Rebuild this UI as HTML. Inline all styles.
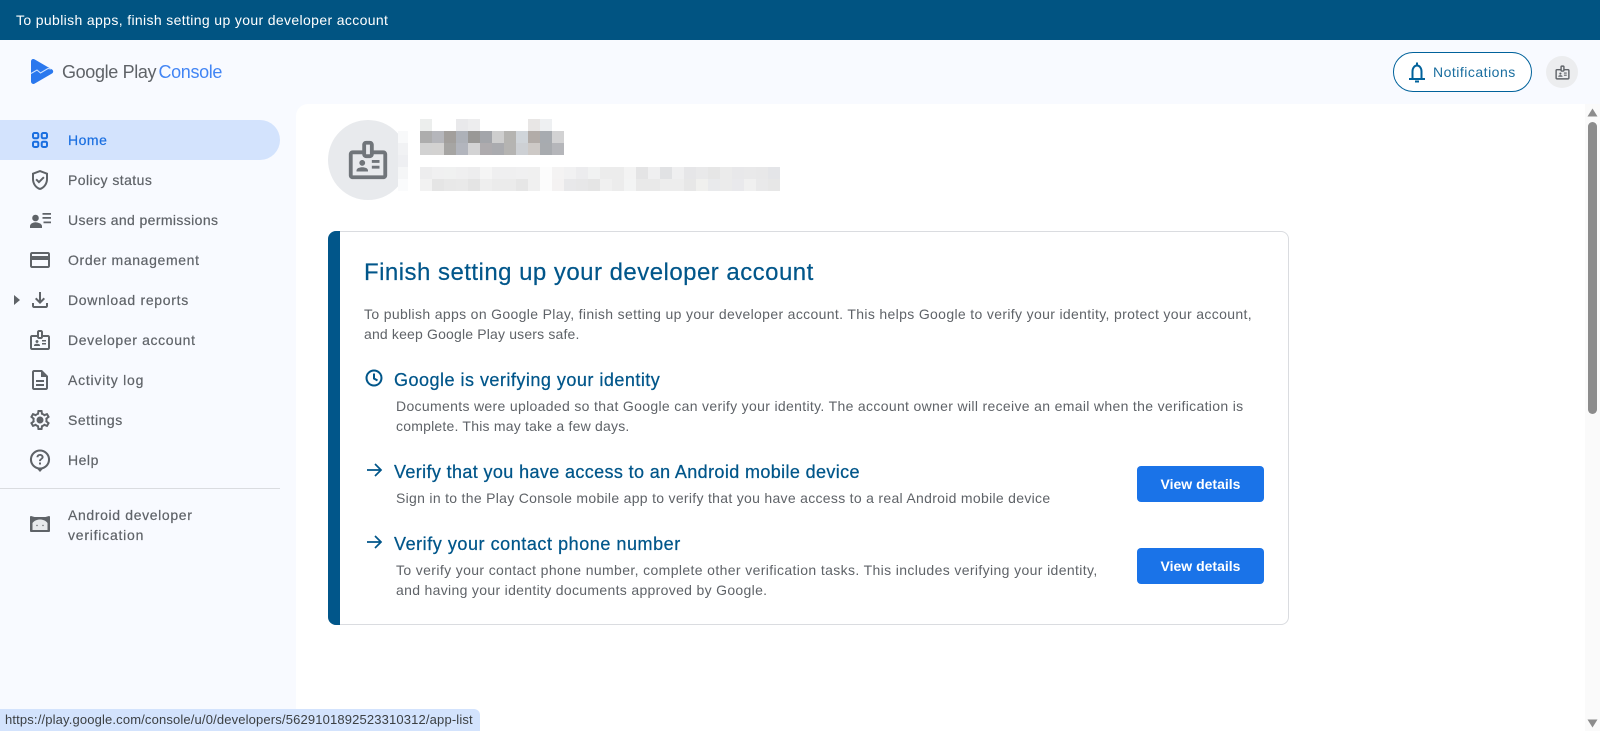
<!DOCTYPE html>
<html><head><meta charset="utf-8"><style>
*{box-sizing:border-box}
html,body{margin:0;padding:0;width:1600px;height:731px;overflow:hidden;background:#f8faff;font-family:"Liberation Sans",sans-serif}
.a{position:absolute;white-space:nowrap}
.nav{left:68px;font-size:14px;line-height:20px;color:#5f6368;letter-spacing:.52px;-webkit-text-stroke:.2px}
.ic{position:absolute;left:28px;width:24px;height:24px;fill:#5f6368}
.h{left:394px;font-size:18px;line-height:24px;color:#01568a;letter-spacing:.43px;-webkit-text-stroke:.25px}
.d{font-size:14px;line-height:20px;color:#5f6368;letter-spacing:.27px}
.btn{left:1137px;width:127px;height:36px;background:#1a73e8;border-radius:4px;color:#fff;font-size:14px;font-weight:bold;line-height:36px;text-align:center}
</style></head><body>
<div class="a" style="left:0;top:0;width:1600px;height:40px;background:#015482"></div>
<div class="a" style="left:16px;top:10px;font-size:14px;line-height:20px;color:#fff;letter-spacing:.36px">To publish apps, finish setting up your developer account</div>

<svg class="a" style="left:30px;top:58px" width="24" height="27" viewBox="0 0 24 27"><path d="M1 3.500C1 1.400 3 .400 4.800 1.500L22 11.500c1.600 1 1.600 3 0 4L4.800 25.500C3 26.600 1 25.600 1 23.500z" fill="#2a78ee"/><path d="M1 15.500l6-3.500 3.500 3 7.500-4.500 3 .500" fill="none" stroke="#cfe3ff" stroke-width="1.100"/></svg>
<div class="a" style="left:62px;top:60px;font-size:18px;line-height:24px;color:#5f6368;letter-spacing:-.35px">Google Play <span style="color:#4285f4;position:absolute;left:96.500px;top:0;letter-spacing:-.35px">Console</span></div>

<div class="a" style="left:0;top:120px;width:280px;height:40px;background:#d3e3fd;border-radius:0 20px 20px 0"></div>
<svg class="ic" style="top:128px" viewBox="0 0 24 24"><g fill="none" stroke="#1a6fe0" stroke-width="2"><rect x="5" y="5" width="5.300" height="5.300" rx="1.500"/><rect x="13.700" y="5" width="5.300" height="5.300" rx="1.500"/><rect x="5" y="13.700" width="5.300" height="5.300" rx="1.500"/><rect x="13.700" y="13.700" width="5.300" height="5.300" rx="1.500"/></g></svg>
<div class="a nav" style="top:130px;color:#1a6fe0">Home</div>

<svg class="ic" style="top:168px" viewBox="0 0 24 24"><path d="M12 2 4 5v6.090c0 5.050 3.410 9.760 8 10.910 4.590-1.150 8-5.860 8-10.910V5l-8-3zm6 9.090c0 4-2.550 7.700-6 8.830-3.450-1.130-6-4.820-6-8.830v-4.700l6-2.250 6 2.250v4.700z"/><path d="M8.820 10.590 7.400 12l3.540 3.540 5.660-5.660-1.410-1.410-4.240 4.240z"/></svg>
<div class="a nav" style="top:170px;letter-spacing:.44px">Policy status</div>

<svg class="ic" style="top:208px" viewBox="0 0 24 24"><circle cx="7.500" cy="10" r="3.300"/><path d="M2 20v-2c0-2.400 3.300-3.800 5.500-3.800S14 15.600 14 18v2z"/><path d="M14.500 5h8.500v1.700h-8.500zM14.500 9h8.500v1.700h-8.500zM15.500 13.500h7.500v1.700h-7.500z"/></svg>
<div class="a nav" style="top:210px;letter-spacing:.38px">Users and permissions</div>

<svg class="ic" style="top:248px" viewBox="0 0 24 24"><path d="M20 4H4c-1.110 0-1.990.890-1.990 2L2 18c0 1.110.890 2 2 2h16c1.110 0 2-.890 2-2V6c0-1.110-.890-2-2-2zm0 14H4v-6h16v6zm0-10H4V6h16v2z"/></svg>
<div class="a nav" style="top:250px;letter-spacing:.64px">Order management</div>

<svg class="a" style="left:14px;top:295px" width="6" height="10" viewBox="0 0 6 10"><path d="M0 0l6 5-6 5z" fill="#5f6368"/></svg>
<svg class="ic" style="top:288px" viewBox="0 0 24 24"><path d="M18 15v3H6v-3H4v3c0 1.100.900 2 2 2h12c1.100 0 2-.900 2-2v-3h-2zm-1-4-1.410-1.410L13 12.170V4h-2v8.170L8.410 9.590 7 11l5 5 5-5z"/></svg>
<div class="a nav" style="top:290px;letter-spacing:.7px">Download reports</div>

<svg class="ic" style="top:328px" viewBox="0 0 24 24"><path d="M20 7h-5V4c0-1.100-.900-2-2-2h-2c-1.100 0-2 .900-2 2v3H4c-1.100 0-2 .900-2 2v11c0 1.100.900 2 2 2h16c1.100 0 2-.900 2-2V9c0-1.100-.900-2-2-2zm-9-3h2v5h-2V4zm9 16H4V9h5c0 1.100.900 2 2 2h2c1.100 0 2-.900 2-2h5v11z"/><path d="M9 15c.830 0 1.500-.670 1.500-1.500S9.830 12 9 12s-1.500.670-1.500 1.500S8.170 15 9 15zM11.080 16.180C10.440 15.900 9.740 15.750 9 15.750s-1.440.150-2.080.430C6.360 16.420 6 16.960 6 17.570V18h6v-.430c0-.610-.360-1.150-.920-1.390zM18 12h-4v1.500h4zM18 15h-4v1.500h4z"/></svg>
<div class="a nav" style="top:330px;letter-spacing:.64px">Developer account</div>

<svg class="ic" style="top:368px" viewBox="0 0 24 24"><path d="M8 16h8v2H8zm0-4h8v2H8zm6-10H6c-1.100 0-2 .900-2 2v16c0 1.100.890 2 1.990 2H18c1.100 0 2-.900 2-2V8l-6-6zm4 18H6V4h7v5h5v11z"/></svg>
<div class="a nav" style="top:370px;letter-spacing:.77px">Activity log</div>

<svg class="ic" style="top:408px" viewBox="0 0 24 24"><path d="M19.430 12.980c.040-.320.070-.640.070-.980 0-.340-.030-.660-.070-.980l2.110-1.650c.190-.150.240-.420.120-.640l-2-3.460c-.090-.160-.260-.250-.440-.250-.060 0-.120.010-.170.030l-2.490 1c-.520-.400-1.080-.730-1.690-.980l-.380-2.650C14.460 2.180 14.250 2 14 2h-4c-.250 0-.460.180-.490.420l-.380 2.650c-.610.250-1.170.590-1.690.980l-2.490-1c-.060-.020-.120-.030-.180-.030-.170 0-.340.090-.430.250l-2 3.460c-.130.220-.070.490.120.640l2.110 1.650c-.040.320-.070.650-.070.980 0 .330.030.660.070.980l-2.110 1.650c-.190.150-.240.420-.120.640l2 3.460c.090.160.260.250.440.250.060 0 .120-.010.170-.030l2.490-1c.520.400 1.080.730 1.690.980l.380 2.650c.030.240.240.420.490.420h4c.250 0 .460-.180.490-.420l.380-2.650c.610-.250 1.170-.590 1.690-.980l2.490 1c.060.020.120.030.180.030.170 0 .340-.090.430-.250l2-3.460c.120-.220.070-.490-.120-.640l-2.110-1.650zm-1.980-1.710c.040.310.050.520.050.730 0 .210-.020.430-.050.730l-.140 1.130.890.700 1.080.840-.700 1.210-1.270-.510-1.040-.420-.900.680c-.430.320-.840.560-1.250.730l-1.060.430-.160 1.130-.200 1.350h-1.400l-.190-1.350-.160-1.130-1.060-.430c-.430-.180-.830-.410-1.230-.710l-.910-.700-1.060.430-1.270.510-.700-1.210 1.080-.840.890-.700-.140-1.130c-.030-.310-.050-.540-.050-.740s.020-.430.050-.730l.140-1.130-.890-.700-1.080-.840.700-1.210 1.270.510 1.040.420.900-.680c.430-.320.840-.560 1.250-.730l1.060-.430.160-1.130.200-1.350h1.390l.190 1.350.160 1.130 1.060.430c.430.180.830.410 1.230.710l.910.700 1.060-.430 1.270-.510.700 1.210-1.070.850-.890.700.140 1.130z"/><circle cx="12" cy="12" r="3.500"/></svg>
<div class="a nav" style="top:410px">Settings</div>

<svg class="ic" style="top:448px" viewBox="0 0 24 24"><path d="M12 1.500a10 10 0 0 0-2.500 19.700L12 24l2.500-2.800A10 10 0 0 0 12 1.500zm0 18a8 8 0 1 1 0-16 8 8 0 0 1 0 16z"/><path d="M12 6c-2 0-3.500 1.400-3.500 3.200h1.900c0-.800.700-1.400 1.600-1.400s1.600.600 1.600 1.300c0 1.500-2.600 1.400-2.600 4h2c0-1.700 2.600-2 2.600-4 0-1.800-1.600-3.100-3.600-3.100zM11 14.500h2v2h-2z"/></svg>
<div class="a nav" style="top:450px">Help</div>

<div class="a" style="left:0;top:488px;width:280px;height:1px;background:#dadce0"></div>
<svg class="ic" style="top:511px" viewBox="0 0 24 24"><path d="M3 5L6.500 6H17.500L21 5c.600 0 1 .400 1 1V20c0 .600-.400 1-1 1H3c-.600 0-1-.400-1-1V6c0-.600.400-1 1-1z"/><path d="M4.500 19V12c2-2.500 4.500-3.500 7.500-3.500s5.500 1 7.500 3.500V19z" fill="#e8eaed"/><circle cx="9" cy="14.500" r=".700"/><circle cx="15" cy="14.500" r=".700"/></svg>
<div class="a nav" style="top:505px;letter-spacing:.64px">Android developer</div>
<div class="a nav" style="top:525px;letter-spacing:.77px">verification</div>

<div class="a" style="left:1393px;top:52px;width:139px;height:40px;border:1px solid #01629b;border-radius:20px;background:#fff"></div>
<svg class="a" style="left:1405px;top:60px" width="24" height="24" viewBox="0 0 24 24" fill="none" stroke="#01629b" stroke-width="2"><path d="M7.500 19V11.500c0-3.500 2-6 4.500-6s4.500 2.500 4.500 6V19"/><path d="M4 19H20M12 2.500V5.500M10 21.500H14"/></svg>
<div class="a" style="left:1433px;top:62px;font-size:14px;line-height:20px;color:#1a6e9f;letter-spacing:.5px">Notifications</div>
<div class="a" style="left:1546px;top:56px;width:32px;height:32px;border-radius:50%;background:#ecedef"></div>
<svg class="a" style="left:1553.500px;top:63.500px" width="17" height="17" viewBox="0 0 24 24" fill="#5f6368"><path d="M20 7h-5V4c0-1.100-.900-2-2-2h-2c-1.100 0-2 .900-2 2v3H4c-1.100 0-2 .900-2 2v11c0 1.100.900 2 2 2h16c1.100 0 2-.900 2-2V9c0-1.100-.900-2-2-2zm-9-3h2v5h-2V4zm9 16H4V9h5c0 1.100.900 2 2 2h2c1.100 0 2-.900 2-2h5v11z"/><path d="M9 15c.830 0 1.500-.670 1.500-1.500S9.830 12 9 12s-1.500.670-1.500 1.500S8.170 15 9 15zM11.080 16.180C10.440 15.900 9.740 15.750 9 15.750s-1.440.150-2.080.430C6.360 16.420 6 16.960 6 17.570V18h6v-.430c0-.610-.360-1.150-.920-1.390zM18 12h-4v1.500h4zM18 15h-4v1.500h4z"/></svg>

<div class="a" style="left:296px;top:104px;width:1304px;height:627px;background:#fff;border-radius:12px 0 0 0"></div>
<div class="a" style="left:1585px;top:104px;width:15px;height:627px;background:#fafafa"></div>
<svg class="a" style="left:1587px;top:108px" width="11" height="9"><path d="M5.500 0.500L10.500 8.500H0.500z" fill="#8c8c8c"/></svg>
<div class="a" style="left:1588px;top:122px;width:9px;height:292px;background:#8c8c8c;border-radius:5px"></div>
<svg class="a" style="left:1587px;top:719px" width="11" height="9"><path d="M0.500 0.500H10.500L5.500 8.500z" fill="#8c8c8c"/></svg>

<div class="a" style="left:328px;top:120px;width:80px;height:80px;border-radius:50%;background:#e8eaed"></div>
<svg class="a" style="left:345px;top:137px" width="46" height="46" viewBox="0 0 24 24" fill="#70757a"><path d="M20 7h-5V4c0-1.100-.900-2-2-2h-2c-1.100 0-2 .900-2 2v3H4c-1.100 0-2 .900-2 2v11c0 1.100.900 2 2 2h16c1.100 0 2-.900 2-2V9c0-1.100-.900-2-2-2zm-9-3h2v5h-2V4zm9 16H4V9h5c0 1.100.900 2 2 2h2c1.100 0 2-.900 2-2h5v11z"/><path d="M9 15c.830 0 1.500-.670 1.500-1.500S9.830 12 9 12s-1.500.670-1.500 1.500S8.170 15 9 15zM11.080 16.180C10.440 15.900 9.740 15.750 9 15.750s-1.440.150-2.080.430C6.360 16.420 6 16.960 6 17.570V18h6v-.430c0-.610-.360-1.150-.920-1.390zM18 12h-4v1.500h4zM18 15h-4v1.500h4z"/></svg>

<svg class="a" style="left:398px;top:119px" width="382" height="72" shape-rendering="crispEdges">
<g>
<rect x="0" y="12" width="10" height="12" fill="#f8f9fa"/><rect x="0" y="24" width="10" height="12" fill="#f1f2f4"/><rect x="0" y="36" width="10" height="12" fill="#eeeff2"/><rect x="0" y="48" width="10" height="12" fill="#f5f6f7"/><rect x="0" y="60" width="10" height="12" fill="#fafbfc"/>
<rect x="22" y="0" width="12" height="12" fill="#eceeed"/><rect x="58" y="0" width="12" height="12" fill="#e9e9eb"/><rect x="70" y="0" width="12" height="12" fill="#ededee"/><rect x="130" y="0" width="12" height="12" fill="#e8e6e5"/><rect x="142" y="0" width="12" height="12" fill="#eef0f2"/>
<rect x="22" y="12" width="12" height="12" fill="#adadad"/><rect x="34" y="12" width="12" height="12" fill="#b5b6bb"/><rect x="46" y="12" width="12" height="12" fill="#a29f9c"/><rect x="58" y="12" width="12" height="12" fill="#adb1b8"/><rect x="70" y="12" width="12" height="12" fill="#999896"/><rect x="82" y="12" width="12" height="12" fill="#a3a5aa"/><rect x="94" y="12" width="12" height="12" fill="#cecece"/><rect x="106" y="12" width="12" height="12" fill="#b5b4b1"/><rect x="118" y="12" width="12" height="12" fill="#d0d5da"/><rect x="130" y="12" width="12" height="12" fill="#b2aca8"/><rect x="142" y="12" width="12" height="12" fill="#a7abb0"/><rect x="154" y="12" width="12" height="12" fill="#d2d2d3"/>
<rect x="22" y="24" width="12" height="12" fill="#d2d2d2"/><rect x="34" y="24" width="12" height="12" fill="#d3d2d1"/><rect x="46" y="24" width="12" height="12" fill="#a6a5a3"/><rect x="58" y="24" width="12" height="12" fill="#b2b5bd"/><rect x="70" y="24" width="12" height="12" fill="#d3d3d4"/><rect x="82" y="24" width="12" height="12" fill="#aeabae"/><rect x="94" y="24" width="12" height="12" fill="#aaabaf"/><rect x="106" y="24" width="12" height="12" fill="#b5b4b2"/><rect x="118" y="24" width="12" height="12" fill="#cdd0d4"/><rect x="130" y="24" width="12" height="12" fill="#cdc9c6"/><rect x="142" y="24" width="12" height="12" fill="#a8abaf"/><rect x="154" y="24" width="12" height="12" fill="#b5b6ba"/>
</g>
<g>
<rect x="22" y="48" width="12" height="12" fill="#ededee"/><rect x="34" y="48" width="12" height="12" fill="#f0f0f1"/><rect x="46" y="48" width="12" height="12" fill="#f0f1f1"/><rect x="58" y="48" width="12" height="12" fill="#efeff0"/><rect x="70" y="48" width="12" height="12" fill="#ededee"/><rect x="82" y="48" width="12" height="12" fill="#f5f5f5"/><rect x="94" y="48" width="12" height="12" fill="#efeff0"/><rect x="106" y="48" width="12" height="12" fill="#efeff0"/><rect x="118" y="48" width="12" height="12" fill="#f0f0f1"/><rect x="130" y="48" width="12" height="12" fill="#f0f0f0"/><rect x="142" y="48" width="12" height="12" fill="#fcfcfc"/><rect x="154" y="48" width="12" height="12" fill="#f4f3f3"/><rect x="166" y="48" width="12" height="12" fill="#f1f1f2"/><rect x="178" y="48" width="12" height="12" fill="#ececee"/><rect x="190" y="48" width="12" height="12" fill="#f1f2f2"/>
<rect x="202" y="48" width="12" height="12" fill="#ececec"/><rect x="214" y="48" width="12" height="12" fill="#ececec"/><rect x="226" y="48" width="12" height="12" fill="#f3f3f3"/><rect x="238" y="48" width="12" height="12" fill="#e4e4e5"/><rect x="250" y="48" width="12" height="12" fill="#efeff0"/><rect x="262" y="48" width="12" height="12" fill="#e1e2e4"/><rect x="274" y="48" width="12" height="12" fill="#efeff0"/><rect x="286" y="48" width="12" height="12" fill="#e6e6e8"/><rect x="298" y="48" width="12" height="12" fill="#e9e9ea"/><rect x="310" y="48" width="12" height="12" fill="#e6e6e6"/><rect x="322" y="48" width="12" height="12" fill="#ebebeb"/><rect x="334" y="48" width="12" height="12" fill="#e8e8ea"/><rect x="346" y="48" width="12" height="12" fill="#e9e9ea"/><rect x="358" y="48" width="12" height="12" fill="#e8e8e9"/><rect x="370" y="48" width="12" height="12" fill="#e4e5e8"/>
<rect x="22" y="60" width="12" height="12" fill="#f2f2f2"/><rect x="34" y="60" width="12" height="12" fill="#e5e5e5"/><rect x="46" y="60" width="12" height="12" fill="#e8e8e8"/><rect x="58" y="60" width="12" height="12" fill="#e9e9e9"/><rect x="70" y="60" width="12" height="12" fill="#e4e4e4"/><rect x="82" y="60" width="12" height="12" fill="#eeeeee"/><rect x="94" y="60" width="12" height="12" fill="#ebebeb"/><rect x="106" y="60" width="12" height="12" fill="#ebebeb"/><rect x="118" y="60" width="12" height="12" fill="#e6e6e6"/><rect x="130" y="60" width="12" height="12" fill="#f0f0f0"/><rect x="142" y="60" width="12" height="12" fill="#fcfcfc"/><rect x="154" y="60" width="12" height="12" fill="#f4f2f2"/><rect x="166" y="60" width="12" height="12" fill="#e8e8ea"/><rect x="178" y="60" width="12" height="12" fill="#e7e7e8"/><rect x="190" y="60" width="12" height="12" fill="#e5e5e5"/>
<rect x="202" y="60" width="12" height="12" fill="#f0f0f0"/><rect x="214" y="60" width="12" height="12" fill="#ececec"/><rect x="226" y="60" width="12" height="12" fill="#f3f4f4"/><rect x="238" y="60" width="12" height="12" fill="#e9e9e9"/><rect x="250" y="60" width="12" height="12" fill="#e9e9e9"/><rect x="262" y="60" width="12" height="12" fill="#ededed"/><rect x="274" y="60" width="12" height="12" fill="#ededed"/><rect x="286" y="60" width="12" height="12" fill="#e7e7e7"/><rect x="298" y="60" width="12" height="12" fill="#f0f0ee"/><rect x="310" y="60" width="12" height="12" fill="#e9eaec"/><rect x="322" y="60" width="12" height="12" fill="#ebebeb"/><rect x="334" y="60" width="12" height="12" fill="#e9e9ec"/><rect x="346" y="60" width="12" height="12" fill="#f0f0f0"/><rect x="358" y="60" width="12" height="12" fill="#e9e9ea"/><rect x="370" y="60" width="12" height="12" fill="#e7e7e7"/>
</g></svg>

<div class="a" style="left:328px;top:231px;width:961px;height:394px;background:#fff;border:1px solid #dadce0;border-radius:8px"></div>
<div class="a" style="left:328px;top:231px;width:12px;height:394px;background:#01568a;border-radius:8px 0 0 8px"></div>

<div class="a" style="left:364px;top:257px;font-size:24px;line-height:32px;color:#01568a;letter-spacing:.47px;-webkit-text-stroke:.2px">Finish setting up your developer account</div>
<div class="a d" style="left:364px;top:304px;letter-spacing:.344px">To publish apps on Google Play, finish setting up your developer account. This helps Google to verify your identity, protect your account,</div>
<div class="a d" style="left:364px;top:324px;letter-spacing:.17px">and keep Google Play users safe.</div>

<svg class="a" style="left:362px;top:366px" width="24" height="24" viewBox="0 0 24 24" fill="none" stroke="#01568a" stroke-width="2"><circle cx="12" cy="12" r="7.500"/><path d="M12 7.500V12.500L15.500 14.500"/></svg>
<div class="a h" style="top:368px;letter-spacing:.49px">Google is verifying your identity</div>
<div class="a d" style="left:396px;top:396px;letter-spacing:.33px">Documents were uploaded so that Google can verify your identity. The account owner will receive an email when the verification is</div>
<div class="a d" style="left:396px;top:416px;letter-spacing:.21px">complete. This may take a few days.</div>

<svg class="a" style="left:362px;top:458px" width="24" height="24" viewBox="0 0 24 24" fill="none" stroke="#01568a" stroke-width="1.700"><path d="M5 12H19M13 6l6 6-6 6"/></svg>
<div class="a h" style="top:460px;letter-spacing:.375px">Verify that you have access to an Android mobile device</div>
<div class="a d" style="left:396px;top:488px;letter-spacing:.30px">Sign in to the Play Console mobile app to verify that you have access to a real Android mobile device</div>
<div class="a btn" style="top:466px">View details</div>

<svg class="a" style="left:362px;top:530px" width="24" height="24" viewBox="0 0 24 24" fill="none" stroke="#01568a" stroke-width="1.700"><path d="M5 12H19M13 6l6 6-6 6"/></svg>
<div class="a h" style="top:532px;letter-spacing:.55px">Verify your contact phone number</div>
<div class="a d" style="left:396px;top:560px;letter-spacing:.37px">To verify your contact phone number, complete other verification tasks. This includes verifying your identity,</div>
<div class="a d" style="left:396px;top:580px;letter-spacing:.32px">and having your identity documents approved by Google.</div>
<div class="a btn" style="top:548px">View details</div>

<div class="a" style="left:0;top:709px;width:480px;height:22px;background:#d3e3fd;border-radius:0 6px 0 0"></div>
<div class="a" style="left:5px;top:712px;font-size:13px;line-height:16px;color:#3c4043;letter-spacing:.15px">https://play.google.com/console/u/0/developers/5629101892523310312/app-list</div>
</body></html>
